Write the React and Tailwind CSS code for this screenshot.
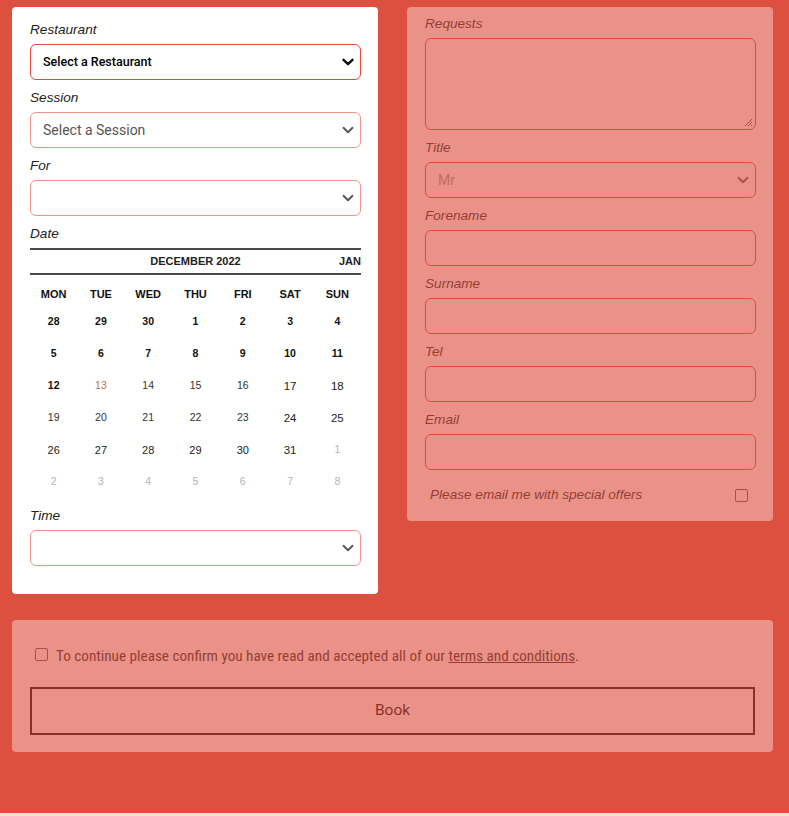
import React from "react";

const Chevron = ({ dark }) => (
  <svg
    width="12"
    height="8"
    viewBox="0 0 12 8"
    className="absolute right-[6px] top-1/2 -translate-y-1/2 pointer-events-none"
  >
    <path
      d="M1.5 1.8 6 6.2 10.5 1.8"
      fill="none"
      stroke={dark ? "#111" : "#555"}
      strokeWidth={dark ? 2.4 : 1.9}
      strokeLinecap="round"
      strokeLinejoin="round"
    />
  </svg>
);

const Label = ({ children }) => (
  <div className="h-[20px] leading-[20px] text-[13.6px] italic text-[#222] font-['Liberation_Sans',Arial,sans-serif]">
    {children}
  </div>
);

const SelectBox = ({ text, dark, strong, muted }) => (
  <div
    className={
      "relative mt-[4px] h-[36px] rounded-[6px] bg-white border flex items-center pl-[12px] " +
      (strong ? "border-[#e8483c]" : "border-[#f0958c]")
    }
  >
    {text ? (
      <span
        className={
          dark
            ? "text-[12.5px] font-medium text-black font-['Roboto',Arial,sans-serif]"
            : muted
            ? "text-[14px] text-[#9a9a9a] font-['Roboto',sans-serif]"
            : "text-[14px] text-[#555] font-['Roboto',sans-serif]"
        }
      >
        {text}
      </span>
    ) : null}
    <Chevron dark={dark} />
  </div>
);

const Input = () => (
  <div className="mt-[4px] h-[36px] rounded-[6px] bg-white border border-[#e8483c]" />
);

const weeks = [
  [28, 29, 30, 1, 2, 3, 4],
  [5, 6, 7, 8, 9, 10, 11],
  [12, 13, 14, 15, 16, 17, 18],
  [19, 20, 21, 22, 23, 24, 25],
  [26, 27, 28, 29, 30, 31, 1],
  [2, 3, 4, 5, 6, 7, 8],
];

function dayClass(r, c) {
  const base = "flex items-center justify-center h-[32px] font-['Liberation_Sans',Arial,sans-serif] ";
  if (r === 5 || (r === 4 && c === 6)) return base + "text-[10.5px] text-[#b5b5b5]";
  if (r < 2 || (r === 2 && c === 0)) return base + "text-[10.5px] font-bold text-[#111]";
  if (r === 2 && c === 1) return base + "text-[10.5px] text-[#c0714a]";
  if (c >= 5) return base + "text-[11.5px] text-[#222] pt-[2px]";
  if (r === 4) return base + "text-[11px] font-medium text-[#222]";
  return base + "text-[10.5px] text-[#333]";
}

export default function App() {
  return (
    <div className="w-[789px]">
      <div className="bg-[#dd4f3f] h-[813px] pt-[7px] pl-[12px] pr-[16px]">
        <div className="grid grid-cols-[366px_366px] gap-[29px] items-start">
          {/* Left panel */}
          <div className="bg-white rounded-[4px] pl-[18px] pr-[17px] pt-[13px] pb-[28px]">
            <Label>Restaurant</Label>
            <SelectBox text="Select a Restaurant" dark strong />
            <div className="mt-[8px]">
              <Label>Session</Label>
              <SelectBox text="Select a Session" />
            </div>
            <div className="mt-[8px]">
              <Label>For</Label>
              <SelectBox />
            </div>
            <div className="mt-[8px]">
              <Label>Date</Label>
            </div>
            <div className="mt-[4px] border-t-2 border-b-2 border-[#4a4a4a] h-[27px] grid grid-cols-[1fr_auto_1fr] items-center text-[11px] font-bold text-[#222] font-['Liberation_Sans',Arial,sans-serif]">
              <span />
              <span>DECEMBER 2022</span>
              <span className="justify-self-end">JAN</span>
            </div>
            <div className="mt-[7px] grid grid-cols-7 h-[24px] items-center text-[11px] font-bold text-[#111] font-['Liberation_Sans',Arial,sans-serif]">
              {["MON", "TUE", "WED", "THU", "FRI", "SAT", "SUN"].map((d) => (
                <div key={d} className="text-center">
                  {d}
                </div>
              ))}
            </div>
            <div className="grid grid-cols-7">
              {weeks.map((w, r) =>
                w.map((d, c) => (
                  <div key={r + "-" + c} className={dayClass(r, c)}>
                    {d}
                  </div>
                ))
              )}
            </div>
            <div className="mt-[8px]">
              <Label>Time</Label>
              <SelectBox />
            </div>
          </div>

          {/* Right panel (disabled) */}
          <div className="bg-white rounded-[4px] opacity-[0.38] pl-[18px] pr-[17px] pt-[7px] pb-[14px]">
            <Label>Requests</Label>
            <div className="relative mt-[4px] h-[92px] rounded-[6px] bg-white border border-[#e8483c]">
              <svg width="10" height="10" viewBox="0 0 10 10" className="absolute right-[2px] bottom-[2px]">
                <path d="M9 2 2 9M9 5 5 9M9 8 8 9" stroke="#555" strokeWidth="1" />
              </svg>
            </div>
            <div className="mt-[8px]">
              <Label>Title</Label>
              <SelectBox text="Mr" muted strong />
            </div>
            <div className="mt-[8px]">
              <Label>Forename</Label>
              <Input />
            </div>
            <div className="mt-[8px]">
              <Label>Surname</Label>
              <Input />
            </div>
            <div className="mt-[8px]">
              <Label>Tel</Label>
              <Input />
            </div>
            <div className="mt-[8px]">
              <Label>Email</Label>
              <Input />
            </div>
            <div className="mt-[13px] h-[24px] flex items-center justify-between pl-[5px] pr-[8px]">
              <span className="text-[13.6px] italic text-[#222] font-['Liberation_Sans',Arial,sans-serif]">
                Please email me with special offers
              </span>
              <span className="w-[13px] h-[13px] rounded-[2px] border border-[#555] bg-white" />
            </div>
          </div>
        </div>

        {/* Bottom panel (disabled) */}
        <div className="mt-[26px] w-[761px] bg-white rounded-[4px] opacity-[0.38] px-[18px] pt-[24px] pb-[17px]">
          <div className="h-[24px] flex items-center pl-[5px] gap-[8px] text-[15.2px] text-[#222] font-['Liberation_Sans_Narrow','Roboto_Condensed','Roboto',sans-serif]">
            <span className="w-[13px] h-[13px] rounded-[2px] border border-[#555] bg-white -mt-[4px]" />
            <span>
              To continue please confirm you have read and accepted all of our{" "}
              <span className="underline">terms and conditions</span>.
            </span>
          </div>
          <div className="mt-[19px] h-[48px] border-2 border-black flex items-center justify-center text-[15.5px] text-black font-['Liberation_Sans_Narrow','Roboto',sans-serif]">
            Book
          </div>
        </div>
      </div>
      <div className="h-[3px] bg-[#f7e1d2]" />
    </div>
  );
}
